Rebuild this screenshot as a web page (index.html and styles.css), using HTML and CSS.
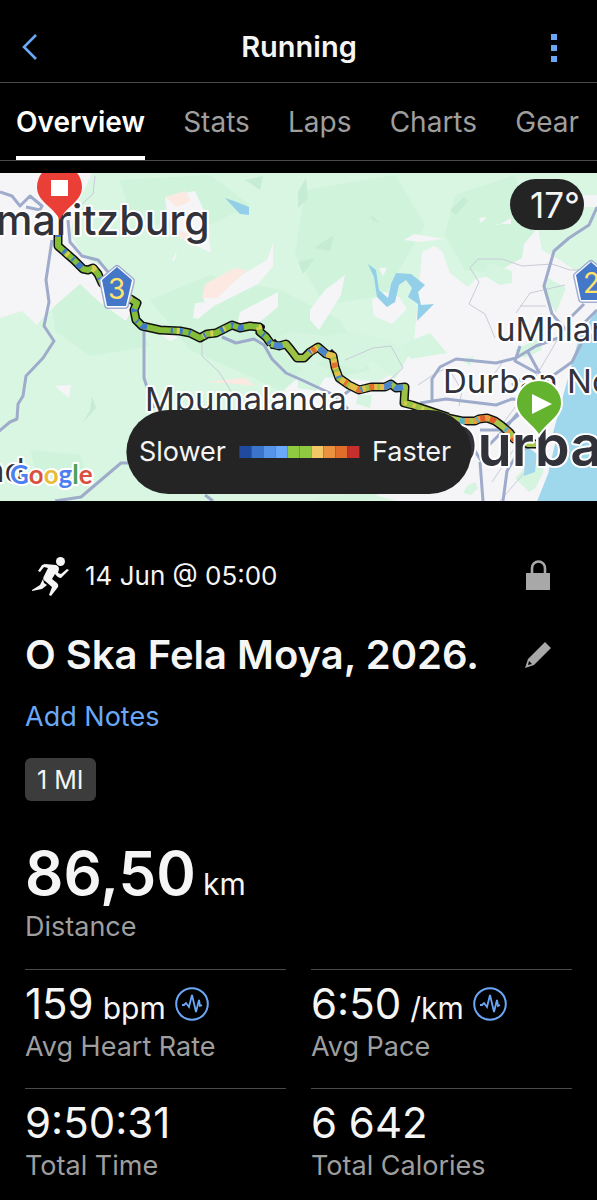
FILE: index.html
```html
<!DOCTYPE html>
<html lang="en">
<head>
<meta charset="utf-8">
<meta name="viewport" content="width=device-width, initial-scale=1">
<title>Running</title>
<link rel="stylesheet" href="styles.css">
</head>
<body>
<header class="topbar">
  <button class="icon-button" type="button" aria-label="Back">
    <svg width="24" height="30" viewBox="0 0 24 30"><path d="M18 3 6 15l12 12" fill="none" stroke="#6aa8f7" stroke-width="2.6"/></svg>
  </button>
  <h1 class="topbar-title">Running</h1>
  <button class="icon-button" type="button" aria-label="More options">
    <svg width="24" height="30" viewBox="0 0 24 30" fill="#6aa8f7"><path d="M9 2h6v6H9zM9 13h6v6H9zM9 24h6v6H9z"/></svg>
  </button>
</header>
<nav class="tabs">
  <a class="tab tab-active" href="#overview" aria-current="page">Overview</a>
  <a class="tab" href="#stats">Stats</a>
  <a class="tab" href="#laps">Laps</a>
  <a class="tab" href="#charts">Charts</a>
  <a class="tab" href="#gear">Gear</a>
</nav>
<main>
<section class="map" aria-label="Route map">
  <svg class="map-canvas" viewBox="0 173 597 328" preserveAspectRatio="xMidYMid slice">
    <defs>
      <path id="west" d="M58 235V246L66 253 74 260 83 269 88 270 93 268 98 274 102 283 118 292 132 300 137 303 134 310 136 320 142 326 160 330 180 331 190 333 200 338 207 334 216 333 232 325 240 328 250 326 259 327 260 332 266 337 271 344"/>
      <path id="middle" d="M271 344L279 346 286 344 291 350 297 358 304 358 310 352 318 347 326 354 333 356 335 367 339 378 349 385 359 390 371 387 385 387 391 384 396 388 405 387 404 403 412 405 430 411 448 417"/>
      <path id="east" d="M448 418L462 421 475 421 479 419 487 418 495 421 502 426 510 433 514 439 528 444 536 444"/>
    </defs>
    <rect x="0" y="173" width="597" height="328" fill="#d9f6e3"/>
    <g fill="#d0f3dc">
      <path d="M150 300l60-25 70 15 60 30 30 50-90 20-90-40zM120 180l90-5 40 30-60 30-60-20zM305 190l90-15 30 50-40 70-60 10-30-50zM455 195l60-20 20 60-20 40-50-5-20-35zM50 292l15-16 35 15 30 20 20 35-60 10-35-25zM30 450l50 5 10 30-50 0z"/>
    </g>
    <g fill="#c6ecd3">
      <path d="M245 180l18-4-3 14zM298 192l8-14 2 20-10 10zM318 245l16-10-4 16-15-3zM298 262l17-4-12 16zM450 210l14-13 4 4-12 14zM92 396l4 12-14 16 8-14zM370 214l10 9-8-3z"/>
    </g>
    <g fill="#f5f5f7">
      <path d="M0 173h92l-16 34-6 28 16 24 22 10 10 28 14 12-6 12-28-20-18-17-15 13-20 18-8 10-15-14-22 7z"/>
      <path d="M165 197l30-6 10 22 6 40-30-15-14-22zM202 296l35-18 30-18 6-17 0 23-15 18-30 15-20 10zM195 303l25-2-22 18-5-1zM240 312l38-20 0 15-22 18-20 5zM55 386l16-1-2 13zM172 261l5-11-2 10zM160 334l13-3 4 7-7 3z"/>
      <path d="M310 310l15-20 20-15-4 20-22 35-9-10zM372 300l12-8 15 5 8 12-15 15-18-8zM404 240l10-6 30 5-26 3zM379 268l8 0-4 8zM479 218l8-1-6 6zM422 252l12-6 8 5 8 22 10 8 8 6 8-8 14-3 14-8 18-10 2-14 14-16 4 22 18 10 40 28v214H400l-70-20-68-30-16-24 30-20 10-20 14-12 40 2 38 4 20-12 16-28z"/>
      <path d="M496 224l15 0 0-6-12 7zM575 195h22v12h-14z"/>
    </g>
    <g fill="#fbe9e2">
      <path d="M165 197l20-6 6 10-14 6zM205 284l30-16 12 2-30 28-15 0zM175 230l15 4 10 10-14-2zM205 382l40-4 10 8-30-3z"/>
    </g>
    <g fill="#d6f5e0">
      <path d="M270 340l22-8 35 4 28-5 36 10 18 14-14 24-22-18-14 10-34-12-22 10-16-12zM490 263l22 8 0 12-12 2-17-10zM548 278l18 10-10 25-12-20zM400 345l30-12 17 20-36 6zM298 373l18-10 14 8-14 20-18-3zM358 395l14 0-2 13-14-4zM515 350l24-12 3 12-18 8z"/>
      <path d="M467 486l8-4 3 6-7 7-8-2zM515 478l30-30 8 30-24 14zM320 496l60-2-20 7h-50zM462 360l12-4-4 10z"/>
    </g>
    <g fill="#9fd8ec">
      <path d="M597 334h-17l-12 44-15 55-5 40-11 28h60z"/>
      <path d="M525 445l12 9-2 18-11 4zM586 326l11-16v24z"/>
    </g>
    <path d="M556 440l-8 34-11 27h-8l14-28 5-36z" fill="#f5f5f7"/>
    <g fill="#93cfe8">
      <path d="M225 198l9 3 15 6v8l-9-1zM368 264l8 6 3 20 9 8 3-14 5-11 15 1 14 11-7 7 3 13 13-1-17 17 1-17-10-7 4-9-6-8-7 5-4 17-8 5-10-10-3-20z"/>
    </g>
    <g fill="none" stroke="#c9ccd8" stroke-width="1">
      <path d="M202 338v18l17 16 12 19M95 176l-2 18-18 16M470 268l8-9 24 0 20 7 30-2 18 6 27 0M470 268l9 14-10 22 16 10 10 24M345 360l28-12 18-2 12 22-20 18M418 385l15-10 15-8 14 24-3 15M565 285l-35 8-14 20M520 306h26M498 430l30-40 35-60M500 501l60-70M492 482l32-48M490 380l14-20"/>
    </g>
    <g fill="none" stroke="#9eabca" stroke-linejoin="round" stroke-width="3">
      <path d="M0 192l12 4 8 10 10-10 12 10-2 4-14-3M68 220l2 22 12 14 16 4 10 12M52 240l-6 40 3 22-5 24 10 15-11 17-17 18-3 20-5 8-1 15-7 3-12 10M144 330v48l10 30M222 337l14 6 18-4 10 6 8 14 14 14 18 8 30 14 14 14M55 501l26-4 40-34 15 0M205 495l8 6M350 390l-16 12M597 207l-8 18-20 13-15 13-10 35 8 28 14 16M570 318l14-14M597 310l-12 12M432 401v-22l8-12 16-8 40 4 20-5 20-12 22-8M420 403l26-4 50 6 16-6 22 2M588 330l-16 32-28 20-42 50-14 14M520 346l-5 15 22 12M528 352l12 22M480 430h20l22-18M480 462l3 39M503 501l4-30 12-20 10-4M468 440l14 22M512 385l10-6 8 14"/>
    </g>
    <g>
      <text class="map-label-city" x="-4" y="235">maritzburg</text>
      <text class="map-label-town" x="496" y="341">uMhlanga</text>
      <text class="map-label-town" x="443" y="393">Durban North</text>
      <text class="map-label-town" x="145" y="411">Mpumalanga</text>
    </g>
    <g fill="none" stroke-linejoin="round">
      <g stroke="#111" stroke-width="9">
        <use href="#west"/>
        <use href="#middle"/>
        <use href="#east"/>
        <path d="M131 298l7 5-5 6M252 325l10 2-4 8M270 347l7-6M295 359l3-6M334 351l-7 7M389 384l3 1M402 385l5 4" stroke-width="6"/>
      </g>
      <use href="#west" stroke="#84bd3a" stroke-width="6"/>
      <use href="#west" stroke="#d8cf50" stroke-width="6" stroke-dasharray="0 22 3 30 4 24 3 5 3 11 2 13"/>
      <use href="#west" stroke="#3f78c9" stroke-width="6" stroke-dasharray="2 16 3 9 2 5 6 24 2 7 3 6 2 15"/>
      <use href="#middle" stroke="#9bc245" stroke-width="6"/>
      <path d="M309 353l9-6 8 7 7 2 2 11 4 11 10 7 10 5 12-3h14l6-3" stroke="#e3bf49" stroke-width="6" stroke-dasharray="10 3 5 4 8 2"/>
      <path d="M312 351l6-4 8 7 7 2 2 11 4 11 10 7 10 5 12-3h14l6-3" stroke="#e0702f" stroke-width="6" stroke-dasharray="4 9 5 14 5 18 3 11"/>
      <path d="M404 403l8 2 18 6 18 6" stroke="#d9cb4c" stroke-width="4" stroke-dasharray="3 6"/>
      <use href="#middle" stroke="#4a86cf" stroke-width="6" stroke-dasharray="0 3 9 36 2 2 0 8 9 28 2 25 2 22 8 4 9 90"/>
      <use href="#east" stroke="#a8c64b" stroke-width="6"/>
      <use href="#east" stroke="#ee9a3c" stroke-width="6" stroke-dasharray="0 16 6 4 8 4 4 3"/>
      <use href="#east" stroke="#de5d2c" stroke-width="6" stroke-dasharray="0 33 5 5 6 24 3 60"/>
      <use href="#east" stroke="#59b3c2" stroke-width="6" stroke-dasharray="0 12 5 12 2 30 3 60"/>
    </g>
    <text class="map-label-metro" x="437" y="466">Durban</text>
    <g stroke-linejoin="round">
      <path d="M117 269l14 12-6 24h-17l-5-24z" fill="#4577c8" stroke="#a0aed0" stroke-width="8"/>
      <path d="M117 269l14 12-6 24h-17l-5-24z" fill="#4577c8" stroke="#fff" stroke-width="5"/>
      <path d="M117 267l15 13-6 26h-19l-5-26z" fill="#4577c8"/>
      <path d="M591 264l14 12-5 23h-18l-5-23z" fill="#4577c8" stroke="#a0aed0" stroke-width="8"/>
      <path d="M591 264l14 12-5 23h-18l-5-23z" fill="#4577c8" stroke="#fff" stroke-width="5"/>
      <path d="M591 262l15 13-6 25h-19l-5-25z" fill="#4577c8"/>
    </g>
    <text class="map-shield" x="108" y="299">3</text>
    <text class="map-shield" x="583" y="293">2</text>
    <path d="M60 220C54 207 37 202 37 187a22 22 0 0 1 45 0C82 202 65 207 60 220z" fill="#ea3f36"/>
    <path d="M51 180h17v16H51z" fill="#fff"/>
    <path d="M539 436c-6-12-23-18-23-33a23 23 0 0 1 46 0c0 15-17 21-23 33z" fill="#63b32e" stroke="#fff" stroke-width="2"/>
    <path d="M532 394l20 10-20 10z" fill="#fff"/>
    <text class="map-label-side" x="-15" y="482">nd</text>
    <text class="map-brand" x="10" y="484"><tspan fill="#4d7ff0">G</tspan><tspan fill="#d9503f">o</tspan><tspan fill="#eabb38">o</tspan><tspan fill="#4d7ff0">g</tspan><tspan fill="#4aa35a">l</tspan><tspan fill="#d9503f">e</tspan></text>
  </svg>
  <span class="temperature">17°</span>
  <div class="legend">
    <span>Slower</span>
    <span class="legend-scale"><i class="pace-1"></i><i class="pace-2"></i><i class="pace-3"></i><i class="pace-4"></i><i class="pace-5"></i><i class="pace-5"></i><i class="pace-6"></i><i class="pace-7"></i><i class="pace-8"></i><i class="pace-9"></i></span>
    <span>Faster</span>
  </div>
</section>
<section class="activity" id="overview">
  <div class="row meta">
    <svg class="runner" width="38" height="40" viewBox="0 0 38 40" fill="#f5f5f5"><circle cx="29.500" cy="5.500" r="4.500"/><path d="M14 8l11 1q3 1 3 4l-1 4 3 1 6-5 2 1-8 8q-3 0-6-4l-3 5 5 4q2 2 1 4l-7 9-2-1 3-8-7-6q-3-2-1-5l4-8-4-1-4 5-2-1 4-6zM12 23l1 4 3 2-5 4-10 2v-1l8-5z"/></svg>
    <time class="date">14 Jun @ 05:00</time>
    <button class="icon-button row-end" type="button" aria-label="Privacy">
      <svg width="28" height="34" viewBox="0 0 28 34"><path d="M8 16V9a6.500 6.500 0 0 1 13 0v7" fill="none" stroke="#a8a8a8" stroke-width="2.600"/><path d="M2 14h24v17H2z" fill="#a8a8a8"/></svg>
    </button>
  </div>
  <div class="row title-row">
    <h2 class="title">O Ska Fela Moya, 2026.</h2>
    <button class="icon-button row-end" type="button" aria-label="Edit name">
      <svg width="28" height="28" viewBox="0 0 28 28" fill="#a8a8a8"><path fill-rule="evenodd" d="M21 1l6 6L10 24 1 27l3-9zM5 20l-1 4 4-1z"/></svg>
    </button>
  </div>
  <a class="notes" href="#notes">Add Notes</a>
  <span class="chip">1 MI</span>
  <div class="distance">
    <p class="distance-value">86,50 <span class="unit">km</span></p>
    <p class="label">Distance</p>
  </div>
  <div class="stats">
    <div class="stat">
      <p class="value">159 <span class="unit">bpm</span>
        <svg class="pulse" width="34" height="34" viewBox="0 0 34 34" fill="none" stroke="#6aa8f7"><circle cx="17" cy="17" r="15.800" stroke-width="2"/><path d="M7 18l2 0 2-2 3 4 3-12 4 17 3-12 1 6 2-1" stroke-width="1.800"/></svg></p>
      <p class="label">Avg Heart Rate</p>
    </div>
    <div class="stat">
      <p class="value">6:50 <span class="unit">/km</span>
        <svg class="pulse" width="34" height="34" viewBox="0 0 34 34" fill="none" stroke="#6aa8f7"><circle cx="17" cy="17" r="15.800" stroke-width="2"/><path d="M7 18l2 0 2-2 3 4 3-12 4 17 3-12 1 6 2-1" stroke-width="1.800"/></svg></p>
      <p class="label">Avg Pace</p>
    </div>
    <div class="stat">
      <p class="value">9:50:31</p>
      <p class="label">Total Time</p>
    </div>
    <div class="stat">
      <p class="value">6 642</p>
      <p class="label">Total Calories</p>
    </div>
  </div>
</section>
</main>
</body>
</html>
```
FILE: styles.css
```css
* { box-sizing: border-box; }
body {
  margin: 0;
  background: #000;
  color: #f5f5f5;
  font-family: Inter, "Liberation Sans", sans-serif;
  font-size: 27px;
  line-height: 34px;
}
h1, h2, p { margin: 0; }
a { text-decoration: none; }
.icon-button {
  display: flex;
  padding: 0;
  border: 0;
  background: none;
}
.topbar {
  display: flex;
  align-items: center;
  justify-content: space-between;
  padding: 30px 31px 18px 18px;
  border-bottom: 1px solid #4a4a4a;
}
.topbar-title {
  padding-left: 14px;
  font-size: 29px;
  font-weight: 600;
  line-height: 34px;
}
.tabs {
  display: flex;
  justify-content: space-between;
  padding: 0 18px 0 16px;
  border-bottom: 1px solid #4a4a4a;
  font-size: 28px;
}
.tab {
  padding: 22px 0 17px;
  border-bottom: 4px solid transparent;
  color: #9e9e9e;
}
.tab-active {
  border-bottom-color: #fff;
  color: #fff;
  font-weight: 600;
}
.map {
  position: relative;
  margin-top: 12px;
  overflow: hidden;
}
.map-canvas {
  display: block;
  width: 100%;
}
.map-canvas text {
  fill: #32333a;
  stroke: #fff;
  stroke-width: 4px;
  stroke-linejoin: round;
  paint-order: stroke;
}
.map-canvas .map-label-city { font-size: 41px; font-weight: 500; }
.map-canvas .map-label-town,
.map-canvas .map-label-side { font-size: 33px; }
.map-canvas .map-label-metro { font-size: 56px; font-weight: 600; }
.map-canvas .map-shield {
  font-size: 28px;
  fill: #ffe36b;
  stroke: none;
}
.map-canvas .map-brand {
  font-family: Lato, sans-serif;
  font-size: 26px;
  font-weight: 700;
}
.temperature {
  position: absolute;
  top: 6px;
  right: 13px;
  padding: 9px 4px 8px 20px;
  border-radius: 26px;
  background: #242424;
  font-size: 35px;
}
.legend {
  position: absolute;
  bottom: 7px;
  left: 50%;
  display: flex;
  align-items: center;
  gap: 13px;
  padding: 25px 20px 25px 13px;
  border-radius: 42px;
  background: #242424;
  transform: translateX(-50%);
}
.legend-scale { display: flex; }
.legend-scale i {
  width: 12px;
  height: 12px;
}
.pace-1 { background: #1f4aa0; }
.pace-2 { background: #3a74cb; }
.pace-3 { background: #5594ea; }
.pace-4 { background: #6aa8fa; }
.pace-5 { background: #8fc841; }
.pace-6 { background: #f2c765; }
.pace-7 { background: #ea9240; }
.pace-8 { background: #e06e2b; }
.pace-9 { background: #c6302c; }
.activity {
  display: flex;
  flex-direction: column;
  align-items: flex-start;
  padding: 54px 25px 20px;
}
.row {
  display: flex;
  align-items: center;
  width: 100%;
}
.row-end {
  margin-left: auto;
  margin-right: 20px;
}
.meta { height: 42px; }
.runner { margin-left: 6px; margin-right: 16px; }
.date { font-size: 26px; }
.title-row { margin-top: 32px; }
.title {
  font-size: 40px;
  font-weight: 600;
  line-height: 52px;
}
.notes {
  margin-top: 19px;
  color: #6aa8f7;
}
.chip {
  margin-top: 24px;
  padding: 5px 12px 4px;
  border-radius: 6px;
  background: #3c3c3c;
  font-size: 25px;
}
.distance { margin-top: 35px; }
.distance-value {
  font-size: 60px;
  font-weight: 600;
  line-height: 74px;
}
.unit {
  font-size: 30px;
  font-weight: 400;
  line-height: 34px;
}
.distance-value .unit { margin-left: -8px; }
.label { color: #9e9e9e; }
.stats {
  display: grid;
  grid-template-columns: 1fr 1fr;
  column-gap: 25px;
  width: 100%;
  margin-top: 25px;
}
.stat {
  padding: 8px 0 24px;
  border-top: 1px solid #4a4a4a;
}
.value {
  display: flex;
  align-items: baseline;
  gap: 9px;
  font-size: 42px;
  line-height: 52px;
}
.pulse { align-self: center; }
```
